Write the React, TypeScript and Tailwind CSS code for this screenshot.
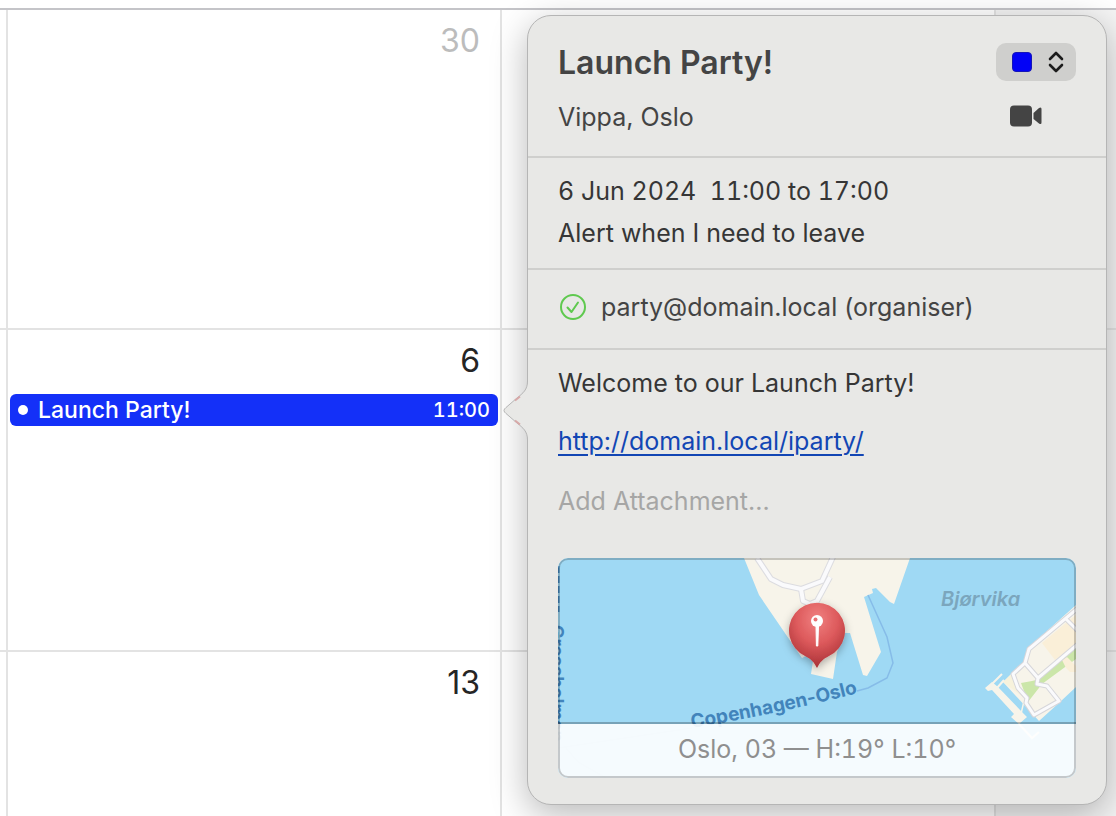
import React from "react";

const days = [
  { label: "30", muted: true },
  { label: "6", muted: false },
  { label: "13", muted: false },
];

function LaunchEvent() {
  return (
    <button
      type="button"
      className="flex h-8 w-full items-center rounded-md bg-[#1430f8] pr-2 pl-2 text-white"
    >
      <span className="size-[10px] rounded-full bg-white" />
      <span className="ml-[10px] text-[23px] leading-8 font-medium">Launch Party!</span>
      <span className="ml-auto text-[20px] leading-8 font-medium tabular-nums">11:00</span>
    </button>
  );
}

function Calendar() {
  return (
    <main className="grid min-h-screen grid-cols-[8px_494px_494px_1fr] grid-rows-[10px_320px_322px_1fr]">
      <div className="col-span-4 border-b-2 border-[#c4c4c8]" />
      {days.map((day, i) => {
        const line = i < 2 ? "border-b-2 border-[#e3e3e3]" : "";
        return (
          <React.Fragment key={day.label}>
            <div className={`border-r-2 border-r-[#e3e3e3] ${line}`} />
            <section className={`border-r-2 border-r-[#e3e3e3] pr-[2px] pl-[2px] ${line}`}>
              <h2
                className={`pt-[10px] pr-[18px] text-right text-[32px] leading-[42px] ${
                  day.muted ? "text-[#bcbcbc]" : "text-[#252525]"
                }`}
              >
                {day.label}
              </h2>
              {day.label === "6" && (
                <div className="mt-3">
                  <LaunchEvent />
                </div>
              )}
            </section>
            <div className={`border-r-2 border-r-[#e3e3e3] ${line}`} />
            <div className={`bg-[#f4f4f4] ${line}`} />
          </React.Fragment>
        );
      })}
    </main>
  );
}

const roads = [
  "M199 0L213 21L225 27L243 31L264 23L275 -1",
  "M243 31L245 43L252 46L259 43L272 19",
];

const eastRoads = [
  "M520 50L471 91L467 105L455 116L460 130L469 140L468 145L476 157L501 143L489 128L479 126L480 120L467 105",
  "M480 120L520 86",
  "M508 61L520 73",
];

function MapDrawing() {
  return (
    <svg viewBox="0 0 518 220" preserveAspectRatio="xMidYMid slice" className="absolute inset-0 size-full" aria-hidden="true">
      <defs>
        <radialGradient id="pin" cx="0.5" cy="0.25" r="0.75">
          <stop offset="0" stopColor="#f08080" />
          <stop offset="0.5" stopColor="#dd5a5c" />
          <stop offset="1" stopColor="#a83035" />
        </radialGradient>
        <path id="ferry" d="M134 170Q216 157 320 130" />
        <filter id="shade" x="-50%" y="-50%" width="200%" height="200%">
          <feDropShadow dx="0" dy="3" stdDeviation="4" floodOpacity="0.3" />
        </filter>
      </defs>
      <rect width="518" height="220" fill="#9fd9f4" />
      <path
        d="M186 0L201 37L244 100L248 98L255 103L253 116L275 121L279 94L287 75L292 75L305 117L309 118L323 94L306 39L315 35L314 31L318 30L332 44L336 46L352 0Z"
        fill="#f7f4ea"
      />
      {roads.map((d) => (
        <path key={d} d={d} fill="none" stroke="#dcdce0" strokeWidth="6" strokeLinejoin="round" />
      ))}
      {roads.map((d) => (
        <path key={d} d={d} fill="none" stroke="#fafafc" strokeWidth="4" strokeLinejoin="round" />
      ))}
      <path d="M310 37L329 79L335 105L329 120L310 130L299 133" fill="none" stroke="#86bce8" strokeWidth="1.5" />

      <path d="M518 47L470 90L465 105L445 124L481 163L502 144L518 129Z" fill="#f7f4ea" />
      <path d="M484 85L509 64L518 57V87L497 102Z" fill="#faefd8" />
      <path d="M445 124L454 115L460 130L469 142Z" fill="#f7f2dc" />
      <path d="M463 125L474 123L482 121L518 89V101L484 126L470 144Z" fill="#cbe6a9" />
      <path d="M504 102L509 99L518 108V114H512L508 110Z" fill="#faefd8" />
      <path d="M463 156L466 143L464 140L468 139" fill="none" stroke="#f7f4ea" strokeWidth="1.5" />
      <path d="M427 130L434 124L440 129L464 154L469 159L461 166L453 159L456 156L434 132L430 133Z" fill="#f7f4ea" />
      <path d="M434 126L444 116M439 130L446 122" stroke="#f7f4ea" strokeWidth="2" />
      <path d="M461 166L474 180L481 174" fill="none" stroke="#f7f4ea" strokeWidth="2" />
      {eastRoads.map((d) => (
        <path key={d} d={d} fill="none" stroke="#d6d6da" strokeWidth="5" strokeLinejoin="round" />
      ))}
      {eastRoads.map((d) => (
        <path key={d} d={d} fill="none" stroke="#fafafc" strokeWidth="3" strokeLinejoin="round" />
      ))}
      <path d="M0 190L134 170M8 190L20 204L48 220" fill="none" stroke="#86bce8" strokeOpacity="0.5" strokeWidth="1.5" />
      <path d="M0.500 8V54" stroke="#4284bb" strokeWidth="2" strokeDasharray="7 3" />

      <text fill="#4284bb" fontSize="19" fontWeight="700">
        <textPath href="#ferry">Copenhagen-Oslo</textPath>
      </text>
      <text transform="translate(-7 67) rotate(90)" fill="#4284bb" fontSize="18" fontWeight="700">
        Gressholmen
      </text>
      <text x="383" y="48" fill="#7ba6bd" fontSize="20" fontWeight="600" fontStyle="italic">
        Bjørvika
      </text>

      <path
        d="M259 110C256 104 253 101 247 98A28 28 0 1 1 271 98C265 101 262 104 259 110Z"
        fill="url(#pin)"
        filter="url(#shade)"
      />
      <circle cx="259" cy="63" r="6" fill="#fff" />
      <path d="M258 68H260.5L259.8 88H258.4Z" fill="#fff" stroke="#fff" />
      <circle cx="257.500" cy="61.500" r="2" fill="#e87274" />
    </svg>
  );
}

function MapCard() {
  return (
    <figure className="relative mt-9 flex h-[220px] flex-col justify-end overflow-hidden rounded-[10px]">
      <MapDrawing />
      <figcaption className="relative h-14 border-t-2 border-black/25 bg-white/90 bg-clip-padding text-center text-[25px] leading-[50px] text-[#8f8f8f] tabular-nums">
        Oslo, 03 — H:19° L:10°
      </figcaption>
      <div className="pointer-events-none absolute inset-0 rounded-[10px] border-2 border-black/20" />
    </figure>
  );
}

function EventPopover() {
  return (
    <aside
      aria-label="Launch Party!"
      className="absolute top-[15px] left-[527px] w-[580px] rounded-[24px] border border-[#b5b5b5] bg-[#e8e8e6] text-[25px] leading-[42px] text-[#363636] shadow-[0_10px_36px_rgba(0,0,0,0.28)]"
    >
      <svg viewBox="0 0 26 60" className="absolute top-[364px] -left-[25px] h-[60px] w-[26px]" aria-hidden="true">
        <path
          d="M26 1H24.500C24.500 10 20 13 14 18L3 27.500Q-1 30.500 3 33.500L14 43C20 48 24.500 51 24.500 60H26Z"
          fill="#e8e8e6"
        />
        <path
          d="M24.500 1C24.500 10 20 13 14 18L3 27.500Q-1 30.500 3 33.500L14 43C20 48 24.500 51 24.500 60"
          fill="none"
          stroke="#b5b5b5"
        />
        <path d="M12 20.500L17 16.500M12 40.500L17 44.500" stroke="#d8a8a8" strokeWidth="2" />
      </svg>

      <header className="flex justify-between border-b-2 border-[#cfcfcd] px-[30px] pt-[26px] pb-[18px] text-[#444]">
        <div>
          <h1 className="text-[32px] leading-[42px] font-semibold">Launch Party!</h1>
          <p className="mt-3">Vippa, Oslo</p>
        </div>
        <div className="flex flex-col items-start">
          <button
            type="button"
            aria-label="Calendar colour"
            className="mt-px flex h-[38px] w-20 items-center justify-between rounded-[10px] bg-[#cfcfcd] pr-3 pl-4"
          >
            <span className="size-5 rounded-[4px] border border-[#1515b8] bg-[#0202f6]" />
            <svg viewBox="0 0 16 22" className="h-[22px] w-4" fill="none" stroke="#1c1c1c" strokeWidth="2.600" strokeLinecap="round" strokeLinejoin="round" aria-hidden="true">
              <path d="M2 8L8 2L14 8M2 14L8 20L14 14" />
            </svg>
          </button>
          <button type="button" aria-label="Video call" className="mt-6 ml-[14px]">
            <svg viewBox="0 0 32 22" className="h-[22px] w-8" fill="#444" aria-hidden="true">
              <rect y="0.500" width="22" height="21" rx="4" />
              <path d="M23.500 8L29 3Q31.500 1.500 31.500 4V17.500Q31.500 20 29 18.500L23.500 14Z" />
            </svg>
          </button>
        </div>
      </header>

      <section className="border-b-2 border-[#cfcfcd] px-[30px] pt-3 pb-[14px]">
        <p className="whitespace-pre tabular-nums">6 Jun 2024  11:00 to 17:00</p>
        <p>Alert when I need to leave</p>
      </section>

      <section className="flex items-center border-b-2 border-[#cfcfcd] px-[30px] pt-4 pb-5 text-[#444]">
        <svg viewBox="0 0 28 28" className="ml-px size-7" fill="none" stroke="#5fc94f" strokeWidth="2" strokeLinecap="round" strokeLinejoin="round" aria-hidden="true">
          <circle cx="14" cy="14" r="12" />
          <path d="M8.500 14.500L12.500 19L19 9.500" />
        </svg>
        <p className="ml-[14px]">party@domain.local (organiser)</p>
      </section>

      <section className="px-[30px] pt-3 pb-[26px]">
        <p>Welcome to our Launch Party!</p>
        <p className="mt-4">
          <a href="http://domain.local/iparty/" className="text-[#1246b4] underline decoration-2 underline-offset-4">
            http://domain.local/iparty/
          </a>
        </p>
        <button type="button" className="mt-[18px] block text-[#a6a6a5]">
          Add Attachment...
        </button>
        <MapCard />
      </section>
    </aside>
  );
}

export default function App() {
  return (
    <div className="relative min-h-screen overflow-hidden bg-white font-['Inter',sans-serif]">
      <Calendar />
      <EventPopover />
    </div>
  );
}
